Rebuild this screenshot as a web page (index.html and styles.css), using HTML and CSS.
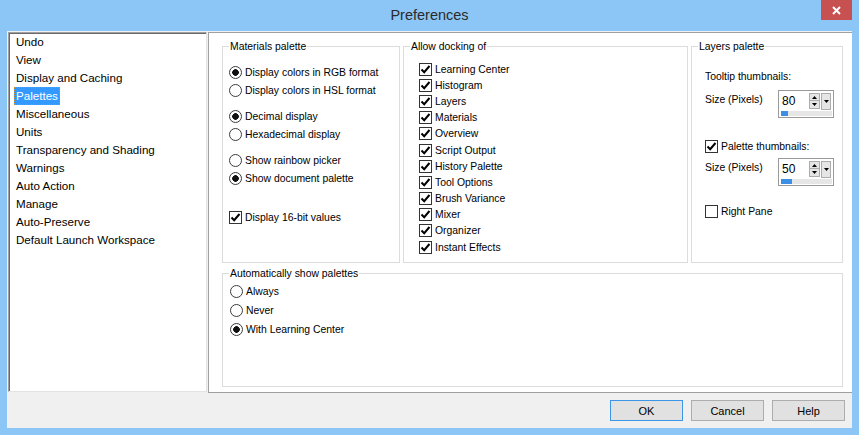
FILE: index.html
```html
<!DOCTYPE html>
<html lang="en">
<head>
    <meta charset="UTF-8">
    <title>Preferences</title>
    <link rel="stylesheet" href="styles.css">
</head>
<body>
    <div class="window">
        <div class="titlebar">
            <span class="title">Preferences</span>
            <span class="close">
                <svg width="9" height="9" viewBox="0 0 9 9"><path d="M1 1L8 8M8 1L1 8" stroke="#fff" stroke-width="2"/></svg>
            </span>
        </div>
        <div class="dialog">
            <div class="main">
                <div class="list">
                    <div class="item">Undo</div>
                    <div class="item">View</div>
                    <div class="item">Display and Caching</div>
                    <div class="item selected">Palettes</div>
                    <div class="item">Miscellaneous</div>
                    <div class="item">Units</div>
                    <div class="item">Transparency and Shading</div>
                    <div class="item">Warnings</div>
                    <div class="item">Auto Action</div>
                    <div class="item">Manage</div>
                    <div class="item">Auto-Preserve</div>
                    <div class="item">Default Launch Workspace</div>
                </div>
                <div class="panel">
                    <div class="groups">
                        <div class="group materials">
                            <div class="group-title">Materials palette</div>
                            <div class="opts">
                                <div class="row"><span class="radio on"></span>Display colors in RGB format</div>
                                <div class="row"><span class="radio"></span>Display colors in HSL format</div>
                                <div class="row gap-s"><span class="radio on"></span>Decimal display</div>
                                <div class="row"><span class="radio"></span>Hexadecimal display</div>
                                <div class="row gap-s"><span class="radio"></span>Show rainbow picker</div>
                                <div class="row"><span class="radio on"></span>Show document palette</div>
                                <div class="row gap-l"><span class="check on"><svg width="11" height="11" viewBox="0 0 11 11"><path d="M1.5 5.5L4.2 8.2L9.5 2" fill="none" stroke="#000" stroke-width="2"/></svg></span>Display 16-bit values</div>
                            </div>
                        </div>
                        <div class="group docking">
                            <div class="group-title">Allow docking of</div>
                            <div class="opts">
                                <div class="row"><span class="check on"><svg width="11" height="11" viewBox="0 0 11 11"><path d="M1.5 5.5L4.2 8.2L9.5 2" fill="none" stroke="#000" stroke-width="2"/></svg></span>Learning Center</div>
                                <div class="row"><span class="check on"><svg width="11" height="11" viewBox="0 0 11 11"><path d="M1.5 5.5L4.2 8.2L9.5 2" fill="none" stroke="#000" stroke-width="2"/></svg></span>Histogram</div>
                                <div class="row"><span class="check on"><svg width="11" height="11" viewBox="0 0 11 11"><path d="M1.5 5.5L4.2 8.2L9.5 2" fill="none" stroke="#000" stroke-width="2"/></svg></span>Layers</div>
                                <div class="row"><span class="check on"><svg width="11" height="11" viewBox="0 0 11 11"><path d="M1.5 5.5L4.2 8.2L9.5 2" fill="none" stroke="#000" stroke-width="2"/></svg></span>Materials</div>
                                <div class="row"><span class="check on"><svg width="11" height="11" viewBox="0 0 11 11"><path d="M1.5 5.5L4.2 8.2L9.5 2" fill="none" stroke="#000" stroke-width="2"/></svg></span>Overview</div>
                                <div class="row"><span class="check on"><svg width="11" height="11" viewBox="0 0 11 11"><path d="M1.5 5.5L4.2 8.2L9.5 2" fill="none" stroke="#000" stroke-width="2"/></svg></span>Script Output</div>
                                <div class="row"><span class="check on"><svg width="11" height="11" viewBox="0 0 11 11"><path d="M1.5 5.5L4.2 8.2L9.5 2" fill="none" stroke="#000" stroke-width="2"/></svg></span>History Palette</div>
                                <div class="row"><span class="check on"><svg width="11" height="11" viewBox="0 0 11 11"><path d="M1.5 5.5L4.2 8.2L9.5 2" fill="none" stroke="#000" stroke-width="2"/></svg></span>Tool Options</div>
                                <div class="row"><span class="check on"><svg width="11" height="11" viewBox="0 0 11 11"><path d="M1.5 5.5L4.2 8.2L9.5 2" fill="none" stroke="#000" stroke-width="2"/></svg></span>Brush Variance</div>
                                <div class="row"><span class="check on"><svg width="11" height="11" viewBox="0 0 11 11"><path d="M1.5 5.5L4.2 8.2L9.5 2" fill="none" stroke="#000" stroke-width="2"/></svg></span>Mixer</div>
                                <div class="row"><span class="check on"><svg width="11" height="11" viewBox="0 0 11 11"><path d="M1.5 5.5L4.2 8.2L9.5 2" fill="none" stroke="#000" stroke-width="2"/></svg></span>Organizer</div>
                                <div class="row"><span class="check on"><svg width="11" height="11" viewBox="0 0 11 11"><path d="M1.5 5.5L4.2 8.2L9.5 2" fill="none" stroke="#000" stroke-width="2"/></svg></span>Instant Effects</div>
                            </div>
                        </div>
                        <div class="group layers">
                            <div class="group-title">Layers palette</div>
                            <div class="opts">
                                <div class="text-row first">Tooltip thumbnails:</div>
                                <div class="size-row">
                                    <span class="size-label">Size (Pixels)</span>
                                    <div class="spin">
                                        <div class="spin-top">
                                            <span class="spin-value">80</span>
                                            <span class="spin-btns">
                                                <span class="sbtn"><svg width="5" height="3" viewBox="0 0 5 3"><path d="M0 3L2.5 0L5 3Z" fill="#000"/></svg></span>
                                                <span class="sbtn"><svg width="5" height="3" viewBox="0 0 5 3"><path d="M0 0L2.5 3L5 0Z" fill="#000"/></svg></span>
                                            </span>
                                            <span class="drop"><svg width="5" height="3" viewBox="0 0 5 3"><path d="M0 0L2.5 3L5 0Z" fill="#000"/></svg></span>
                                        </div>
                                        <div class="track"><div class="fill" style="width: 7px"></div></div>
                                    </div>
                                </div>
                                <div class="row thumbs"><span class="check on"><svg width="11" height="11" viewBox="0 0 11 11"><path d="M1.5 5.5L4.2 8.2L9.5 2" fill="none" stroke="#000" stroke-width="2"/></svg></span>Palette thumbnails:</div>
                                <div class="size-row second">
                                    <span class="size-label">Size (Pixels)</span>
                                    <div class="spin">
                                        <div class="spin-top">
                                            <span class="spin-value">50</span>
                                            <span class="spin-btns">
                                                <span class="sbtn"><svg width="5" height="3" viewBox="0 0 5 3"><path d="M0 3L2.5 0L5 3Z" fill="#000"/></svg></span>
                                                <span class="sbtn"><svg width="5" height="3" viewBox="0 0 5 3"><path d="M0 0L2.5 3L5 0Z" fill="#000"/></svg></span>
                                            </span>
                                            <span class="drop"><svg width="5" height="3" viewBox="0 0 5 3"><path d="M0 0L2.5 3L5 0Z" fill="#000"/></svg></span>
                                        </div>
                                        <div class="track"><div class="fill" style="width: 11px"></div></div>
                                    </div>
                                </div>
                                <div class="row pane"><span class="check"></span>Right Pane</div>
                            </div>
                        </div>
                    </div>
                    <div class="group auto">
                        <div class="group-title">Automatically show palettes</div>
                        <div class="opts">
                            <div class="row"><span class="radio"></span>Always</div>
                            <div class="row"><span class="radio"></span>Never</div>
                            <div class="row"><span class="radio on"></span>With Learning Center</div>
                        </div>
                    </div>
                </div>
            </div>
            <div class="footer">
                <button class="btn default">OK</button>
                <button class="btn">Cancel</button>
                <button class="btn">Help</button>
            </div>
        </div>
    </div>
</body>
</html>
```

FILE: styles.css
```css
* { margin: 0; padding: 0; box-sizing: border-box; }
body { font-family: 'Liberation Sans', Arial, sans-serif; font-size: 10.4px; color: #000; background: #8cc6f6; }

.window { width: 859px; height: 435px; background: #8cc6f6; padding: 0 7px 7px; display: flex; flex-direction: column; }
.titlebar { height: 31px; display: grid; grid-template-columns: 1fr auto 1fr; }
.title { grid-column: 2; align-self: center; font-size: 14.5px; color: #2b2b2b; padding-bottom: 1px; }
.close {
    grid-column: 3; justify-self: end; width: 31px; height: 20px; background: #c75050;
    display: flex; align-items: center; justify-content: center;
}

.dialog { height: 397px; background: #f0f0f0; display: flex; flex-direction: column; }
.main { display: flex; gap: 1px; margin-top: 1px; height: 361px; }

.list {
    width: 199px; height: 360px; margin-left: 1px; background: #fff; font-size: 11.6px;
    border: 1px solid; border-color: #a0a0a0 #e3e3e3 #e3e3e3 #a0a0a0; box-shadow: inset 1px 1px 0 #696969;
}
.item { width: fit-content; margin-left: 5px; padding: 0 2px; height: 18px; line-height: 18px; }
.item.selected { background: #3399ff; color: #fff; outline: 1px dotted #d4882c; outline-offset: -1px; }

.panel {
    width: 644px; height: 361px; background: #fff; padding: 13px 0 0 13px;
    border-left: 1px solid #a0a0a0; border-top: 1px solid #a0a0a0; border-bottom: 1px solid #a0a0a0;
}
.groups { display: flex; gap: 3px; height: 217px; }
.group { border: 1px solid #dcdcdc; }
.materials { width: 178px; }
.docking { width: 285px; }
.layers { width: 152px; }
.auto { width: 621px; height: 114px; margin-top: 10px; }
.group-title {
    width: fit-content; height: 14px; line-height: 14px; margin: -7px 0 0 6px; padding: 0 1px; background: #fff;
}

.row { display: flex; align-items: center; gap: 3px; height: 18px; white-space: nowrap; }
.materials .opts { padding: 9px 0 0 6px; }
.gap-s { margin-top: 8px; }
.gap-l { margin-top: 21px; }
.docking .opts { padding: 7px 0 0 15px; }
.docking .row { height: 16.2px; }
.auto .opts { padding: 1px 0 0 7px; }
.auto .row { height: 19px; }

.radio {
    width: 13px; height: 13px; border-radius: 50%; border: 1px solid #3c3c3c; background: #fff; flex-shrink: 0;
}
.radio.on { background: radial-gradient(circle, #111 0 3px, #fff 3.6px); }
.check {
    width: 13px; height: 13px; border: 1px solid #333; background: #fff; flex-shrink: 0;
    display: flex; align-items: center; justify-content: center;
}

.layers .opts { padding: 15px 0 0 13px; }
.text-row { height: 16px; line-height: 16px; }
.size-row { display: flex; margin-top: 5px; }
.size-row.second { margin-top: 4px; }
.size-label { width: 73px; line-height: 20px; }
.thumbs { margin-top: 20px; height: 16px; }
.pane { margin-top: 17px; height: 16px; }

.spin {
    width: 56px; height: 28px; border: 1px solid #9a9a9a; background: #fff; padding: 1px 1px 1px 2px;
    display: flex; flex-direction: column;
}
.spin-top { display: flex; height: 18px; }
.spin-value { flex: 1; font-size: 12px; line-height: 18px; padding-left: 1px; }
.spin-btns { width: 11px; display: flex; flex-direction: column; padding-top: 1px; }
.sbtn {
    height: 8px; background: #e5e5e5; border: 1px solid #acacac; display: flex; align-items: center; justify-content: center;
}
.sbtn + .sbtn { border-top: none; height: 8px; }
.drop {
    width: 10px; height: 17px; margin: 1px 1px 0 1px; background: #e5e5e5; border: 1px solid #acacac;
    display: flex; align-items: center; justify-content: center;
}
.track { height: 5px; margin-top: 1px; background: #e6e6e6; }
.fill { height: 100%; background: #3b8fe5; }

.footer { display: flex; justify-content: flex-end; gap: 8px; padding: 7px 7px 0 0; }
.btn {
    width: 73px; height: 21px; background: #e1e1e1; border: 1px solid #adadad;
    font-family: 'Liberation Sans', Arial, sans-serif; font-size: 11px; color: #000;
}
.btn.default { border-color: #3c96e8; }
```
